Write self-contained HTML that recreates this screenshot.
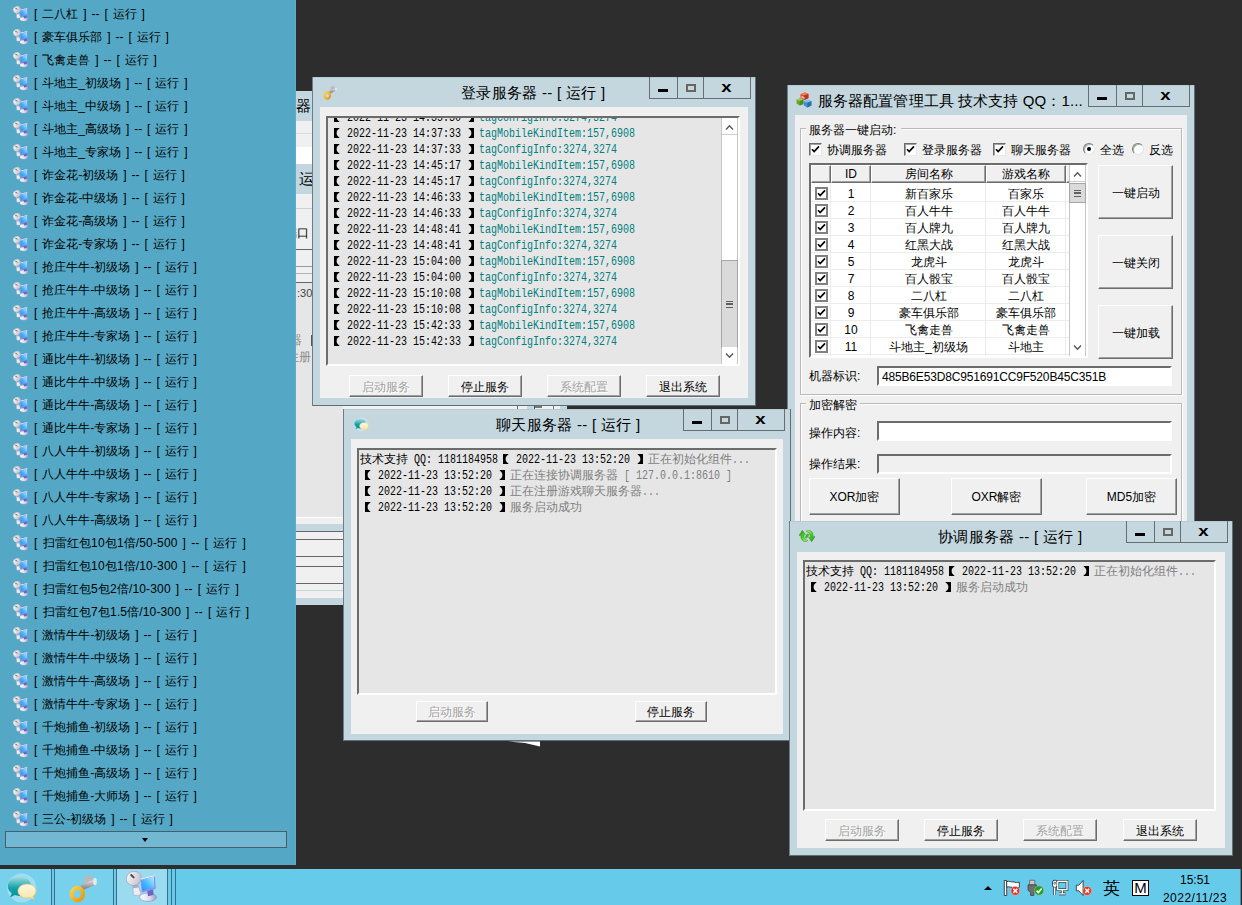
<!DOCTYPE html>
<html lang="zh"><head><meta charset="utf-8"><title>desktop</title>
<style>
*{box-sizing:border-box;margin:0;padding:0}
html,body{width:1242px;height:905px;overflow:hidden;background:#2d2d2d}
body{font-family:"Liberation Sans",sans-serif;font-size:12px;color:#000}
#desk{position:absolute;left:0;top:0;width:1242px;height:905px;overflow:hidden;background:#2d2d2d}
.abs{position:absolute}
/* left panel */
#lp{position:absolute;left:0;top:0;width:296px;height:865px;background:#55a8c5;border-right:1px solid #5cafcd;overflow:hidden}
.lr{position:absolute;left:0;height:23px;line-height:23px;white-space:nowrap;font-size:12px;word-spacing:1.6px}
.lr span{position:absolute;left:34px;top:0}
.li{position:absolute;left:13px;top:3px}
#lpbtn{position:absolute;left:5px;top:831px;width:282px;height:17px;border:1px solid #4a5d6a;background:#73b8d2}
#lpbtn i{position:absolute;left:136px;top:6px;width:0;height:0;border-left:3.500px solid transparent;border-right:3.500px solid transparent;border-top:4px solid #000}
/* windows */
.win{position:absolute;background:#c4d7df;box-shadow:inset 1px 0 0 #6c7f89,inset -1px 0 0 #5f6f78,inset 0 -1px 0 #5f6f78,inset 0 1px 0 #b7cad3}
.wt{position:absolute;left:0;right:0;top:0;height:31px;line-height:31px;text-align:center;font-size:15px;white-space:nowrap}
.cap{position:absolute;top:0;height:22px;width:102px;border:1px solid #666e73;border-top:none}
.cap b{position:absolute;top:0;bottom:0;width:1px;background:#666e73}
.cl{position:absolute;background:#f0f0f0}
.log{position:absolute;background:#e6e6e6;border:2px solid;border-color:#6c6c6c #fff #fff #6c6c6c;overflow:hidden}
.btn{position:absolute;overflow:hidden;background:#f0f0f0;border:1px solid;border-color:#fff #6d6d6d #6d6d6d #fff;box-shadow:inset -1px -1px 0 #a0a0a0;text-align:center;font-size:12px;white-space:nowrap}
.btn.dis{color:#a0a0a0;text-shadow:1px 1px 0 #fff}
.ll{position:absolute;left:1px;height:16px;line-height:16px;white-space:nowrap;font-size:12px}
.m{font-family:"Liberation Mono",monospace;display:inline-block;transform:scaleX(.8333);transform-origin:0 50%;white-space:pre;vertical-align:top}
.k{display:inline-block;width:12px;height:16px;vertical-align:top}
.t{color:#008080}
.g{color:#808080}
.win>.wb{display:none}
.wtt{display:inline-block;white-space:nowrap;text-align:center;overflow:visible;letter-spacing:.3px}
.cap i{position:absolute;font-style:normal}
.cap .mn{left:8px;top:12px;width:10px;height:3px;background:#000}
.cap .mx{left:36px;top:7px;width:10px;height:8px;border:2px solid #666}
.cap .cx{left:53px;top:0;width:47px;height:21px;line-height:19px;text-align:center;font-weight:bold;font-size:15.500px;color:#000;transform:scaleX(1.2)}
.sb{position:absolute;background:#fff;border-left:1px solid #c6c6c6;border-right:1px solid #c6c6c6}
.sbb{position:absolute;left:0;width:15px;height:17px;background:#fff}
.sbb:first-child{border-bottom:1px solid #d0d0d0}
.sbb svg{position:absolute;left:-1px;top:0}
.sbt{position:absolute;left:-1px;width:17px;background:#dadada;border:1px solid #a6a6a6}
.sbt u{position:absolute;left:4px;width:7px;height:7px;border-top:1.500px solid #606060;border-bottom:1.500px solid #606060;text-decoration:none}
.sbt u:after{content:"";position:absolute;left:0;top:1.200px;width:7px;height:1.500px;background:#606060}
.gb{position:absolute;border:1px solid #b9b9b9;box-shadow:inset 1px 1px 0 #fff,1px 1px 0 #fff}
.gl{position:absolute;margin-top:1px;height:14px;line-height:14px;background:#f0f0f0;padding-left:3px;white-space:nowrap;font-size:12px}
.lb{position:absolute;margin-top:1px;height:14px;line-height:14px;white-space:nowrap;font-size:12px}
.cb{position:absolute;width:13px;height:13px;background:#fff;border:1px solid;border-color:#6b6b6b #e8e8e8 #e8e8e8 #6b6b6b;box-shadow:inset 1px 1px 0 #a0a0a0}
.cb svg{position:absolute;left:-1px;top:-1px}
.rd{position:absolute;width:12px;height:12px;border-radius:50%;background:#fff;border:1px solid;border-color:#7a7a7a #e4e4e4 #e4e4e4 #7a7a7a;box-shadow:inset 1px 1px 0 #b0b0b0}
.rd i{position:absolute;left:3px;top:3px;width:4px;height:4px;border-radius:50%;background:#000}
.lv{position:absolute;background:#fff;border:2px solid;border-color:#6c6c6c #fff #fff #6c6c6c;overflow:hidden}
.lh{position:absolute;top:0;height:18px;line-height:17px;background:#f0f0f0;border:1px solid;border-color:#fff #6d6d6d #6d6d6d #fff;box-shadow:inset -1px -1px 0 #a0a0a0;text-align:center;font-size:12px;white-space:nowrap;overflow:hidden}
.vg{position:absolute;top:18px;bottom:0;width:1px;background:#ececec}
.lvr{position:absolute;left:0;width:258px;height:17px;border-bottom:1px solid #ececec;line-height:17px;font-size:12px}
.lvr span{position:absolute;top:1px;text-align:center;white-space:nowrap}
.lvc{position:absolute;left:4px;top:2px;width:13px;height:13px;background:#fff;border:2px solid #808080}
.lvc svg{position:absolute;left:-2px;top:-2px}
.ed{position:absolute;background:#fff;border:2px solid;border-color:#6c6c6c #fff #fff #6c6c6c;line-height:18px;font-size:12px;padding-left:3px;white-space:nowrap;overflow:hidden}
.ed.ro{background:#f0f0f0}
#tb{position:absolute;left:0;top:869px;width:1240px;height:36px;background:#66caea}
#tb:after{content:"";position:absolute;left:1240px;top:0;width:1px;height:36px;background:#4a8ba0}
.tbb{position:absolute;top:0;height:36px;background:#77d0ec}
.tbb.act{background:#9adbf0}
.tbs{position:absolute;top:0;width:1px;height:36px;background:#3e6e85}
.c{display:inline-block;vertical-align:top;white-space:nowrap;overflow:visible;position:relative;top:-1px}
#bg{position:absolute;left:296px;top:91px;width:271px;height:514px;overflow:hidden}
.bd{position:absolute;left:0;width:271px;overflow:hidden}
.bl{position:absolute;left:0;width:271px;height:1px;background:#666}
.bt{position:absolute;font-size:15px;line-height:18px;white-space:nowrap}
.bs{position:absolute;font-size:12px;line-height:14px;white-space:nowrap}

</style></head>
<body>
<svg width="0" height="0" style="position:absolute">
<defs>
<linearGradient id="g-blue" x1="1" y1="0" x2="0" y2="1"><stop offset="0" stop-color="#b4f2ff"/><stop offset=".55" stop-color="#4cb8ff"/><stop offset="1" stop-color="#1494ff"/></linearGradient>
<linearGradient id="g-gold" x1="0" y1="0" x2="1" y2="1"><stop offset="0" stop-color="#ffd24a"/><stop offset="1" stop-color="#e09a10"/></linearGradient>
<linearGradient id="g-teal" x1="0" y1="0" x2="0" y2="1"><stop offset="0" stop-color="#a9dede"/><stop offset=".55" stop-color="#14a2aa"/><stop offset="1" stop-color="#00939b"/></linearGradient><linearGradient id="g-cream" x1="0" y1="0" x2="0" y2="1"><stop offset="0" stop-color="#fff6e8"/><stop offset="1" stop-color="#fbe7a2"/></linearGradient><linearGradient id="g-base" x1="0" y1="0" x2="1" y2="0"><stop offset="0" stop-color="#ffffff"/><stop offset=".6" stop-color="#dcdcea"/><stop offset="1" stop-color="#9c98d8"/></linearGradient><linearGradient id="g-grn" x1="0" y1="0" x2="1" y2="1"><stop offset="0" stop-color="#1f9a0c"/><stop offset=".5" stop-color="#48cf28"/><stop offset="1" stop-color="#9cff6c"/></linearGradient><linearGradient id="g-grn2" x1="1" y1="1" x2="0" y2="0"><stop offset="0" stop-color="#1f9a0c"/><stop offset=".5" stop-color="#48cf28"/><stop offset="1" stop-color="#9cff6c"/></linearGradient><linearGradient id="g-steel" x1="0" y1="0" x2="0" y2="1"><stop offset="0" stop-color="#d0d0d0"/><stop offset="1" stop-color="#8e8e8e"/></linearGradient>
<linearGradient id="g-dish" x1="0" y1="0" x2="1" y2="1"><stop offset="0" stop-color="#ffffff"/><stop offset="1" stop-color="#b8b8c4"/></linearGradient>
<symbol id="i-pc" viewBox="0 0 16 16">
  <ellipse cx="11" cy="13.100" rx="4.200" ry="2.100" fill="url(#g-base)" stroke="#8c8cb4" stroke-width=".3"/>
  <path d="M10.600 9.800L13.600 9.100L13.800 12L11 12.600Z" fill="#6a66c8"/>
  <path d="M3.300 7L5.800 6.400L7.400 11.200C7.200 12.300 4.400 12.700 3.700 11.700Z" fill="#ececf2" stroke="#a4a4b8" stroke-width=".3"/>
  <path d="M3.400 7.200L5.800 6.600L6.300 8.200L3.500 8.600Z" fill="#a9a6dc"/>
  <ellipse cx="3.900" cy="3.700" rx="3.800" ry="3.500" transform="rotate(-25 3.900 3.700)" fill="url(#g-dish)" stroke="#9c9cac" stroke-width=".3"/>
  <path d="M2.600 2L3.800 3.200" stroke="#4a4a4a" stroke-width="1" stroke-linecap="round"/>
  <path d="M7.200 3.800L14.400 2L14.900 8.900L7.900 10.700Z" fill="#8d8fe0"/>
  <path d="M7.200 3.800L14.400 2L14.500 2.600L7.400 4.400Z" fill="#ececfa"/>
  <path d="M7.800 4.400L13.900 2.900L14.200 8.300L8.300 9.800Z" fill="url(#g-blue)"/>
</symbol>
<symbol id="i-key" viewBox="0 0 16 16">
  <path d="M8.600 6.900L8.700 3L9.600 2.300L10.300 2.800L10.900 1.900L12.300 2.100L12.500 5.100Z" fill="#b9b9b9"/>
  <path d="M7.300 8.400L14 5.300" stroke="url(#g-steel)" stroke-width="2.800"/>
  <ellipse cx="14" cy="5.200" rx=".9" ry="1.800" fill="#e8e8e8"/>
  <ellipse cx="5.200" cy="11.500" rx="2.800" ry="3.100" fill="none" stroke="url(#g-gold)" stroke-width="2.100"/>
</symbol>
<symbol id="i-chat" viewBox="0 0 16 16">
  <circle cx="8.400" cy="8.500" r="7.300" fill="#c8ecf8" opacity=".5"/>
  <path d="M7.200 2.750c3.200 0 5.800 2.170 5.800 4.850s-2.600 4.850-5.800 4.850c-.9 0-1.700-.15-2.400-.4L2.500 13.200l.9-2.100C2.200 10.200 1.400 9 1.400 7.600c0-2.680 2.600-4.850 5.800-4.850z" fill="url(#g-teal)"/>
  <path d="M11 6.500c2.500 0 4.500 1.570 4.500 3.500 0 1.100-.65 2.100-1.650 2.700l.9 1.500-2-.95c-.55.150-1.150.250-1.750.250-2.500 0-4.500-1.570-4.500-3.500s2-3.500 4.500-3.500z" fill="url(#g-cream)" stroke="#f0c468" stroke-width=".350"/>
</symbol>
<symbol id="i-cfg" viewBox="0 0 16 16">
  <path d="M4.500 2.200 L9 .6 L12.400 2 L12.400 6.200 L8 8 L4.500 6.400Z" fill="#e2492c"/>
  <path d="M4.500 2.200 L8 3.600 L12.400 2 L9 .6Z" fill="#f47a55"/>
  <path d="M8 3.600 L8 8 L12.400 6.200 L12.400 2Z" fill="#c2331c"/>
  <path d="M.6 7.600 L4.200 6.200 L7.400 7.600 L7.400 12 L3.800 13.400 L.6 11.800Z" fill="#6aa82c"/>
  <path d="M.6 7.600 L3.800 9 L7.400 7.600 L4.200 6.200Z" fill="#9bd054"/>
  <path d="M3.800 9 L3.800 13.400 L7.400 12 L7.400 7.600Z" fill="#4f8a1e"/>
  <path d="M7.800 9.200 L12 7.800 L15.400 9.200 L15.400 13.600 L11.400 15.400 L7.800 13.600Z" fill="#3f8fd0"/>
  <path d="M7.800 9.200 L11.400 10.800 L15.400 9.200 L12 7.800Z" fill="#7cc0f0"/>
  <path d="M11.400 10.800 L11.400 15.400 L15.400 13.600 L15.400 9.200Z" fill="#2a6fae"/>
  <path d="M6 4.200v2.200M6 4.200l1 1.400 1-.6v2" stroke="#fff" stroke-width=".7" fill="none"/>
</symbol>
<symbol id="i-sync" viewBox="0 0 16 12">
  <path d="M3.300.3L6.400 4.600L4.800 4.800C4.600 8 6 10 8.800 10.600C8 11.600 6.500 12 5.200 11.600C2.600 10.600 1.600 8 1.900 5.200L0 5.500Z" fill="url(#g-grn)" stroke="#1c7c0c" stroke-width=".4"/>
  <path d="M12.700 11.700L9.600 7.400L11.200 7.200C11.400 4 10 2 7.200 1.400C8 .4 9.500 0 10.800 .4C13.400 1.400 14.400 4 14.100 6.800L16 6.500Z" fill="url(#g-grn2)" stroke="#1c7c0c" stroke-width=".4"/>
  <ellipse cx="8" cy="6" rx="1.500" ry="2.600" transform="rotate(35 8 6)" fill="#2aa818" opacity=".8"/>
</symbol>
<symbol id="bl" viewBox="0 0 12 16"><path d="M5 2H10.300V2.700C8.500 3.700 7.600 5.100 7.600 7S8.500 10.300 10.300 11.300V12H5Z"/></symbol>
<symbol id="br" viewBox="0 0 12 16"><path d="M7 2H1.700V2.700C3.500 3.700 4.400 5.100 4.400 7S3.500 10.300 1.700 11.300V12H7Z"/></symbol>
</defs>
</svg>
<div id="desk">
<!-- slivers of background windows -->
<div id="bg">
  <div class="bd" style="top:0;height:30px;background:#c4d7df"><span class="bt" style="left:0;top:6px">器</span></div>
  <div class="bd" style="top:30px;height:26px;background:#f0f0f0"></div>
  <div class="bl" style="top:42px;background:#dcdcdc"></div>
  <div class="bd" style="top:56px;height:17px;background:#fff"></div>
  <div class="bd" style="top:73px;height:30px;background:#c4d7df"><span class="bt" style="left:3px;top:6px">运行</span></div>
  <div class="bd" style="top:103px;height:89px;background:#f0f0f0"><span class="bs" style="left:-11px;top:32px">端口</span></div>
  <div class="bl" style="top:117px;background:#d0d0d0"></div>
  <div class="bl" style="top:158px"></div>
  <div class="bl" style="top:175px;background:#9a9a9a"></div>
  <div class="bl" style="top:182px;background:#b5b5b5"></div>
  <div class="bl" style="top:191px"></div>
  <div class="bd" style="top:192px;height:234px;background:#e6e6e6">
    <span class="bs" style="left:1px;top:3px;color:#444;font-size:11px">:30</span>
    <span class="bs" style="left:-6px;top:50px;color:#8a8a8a">器</span>
    <span class="bs" style="left:-9px;top:67px;color:#8a8a8a">注册</span>
    <i class="abs" style="left:15px;top:52px;width:1px;height:11px;background:#555"></i>
  </div>
  <div class="bl" style="top:426px;background:#fff"></div>
  <div class="bd" style="top:427px;height:6px;background:#f0f0f0"></div>
  <div class="bd" style="top:433px;height:7px;background:#c4d7df"></div>
  <div class="bl" style="top:440px"></div>
  <div class="bd" style="top:441px;height:66px;background:#f0f0f0"></div>
  <div class="bl" style="top:448px"></div><div class="bl" style="top:465px"></div><div class="bl" style="top:475px"></div><div class="bl" style="top:492px"></div>
  <div class="bl" style="top:499px;background:#c4d7df"></div>
  <div class="bd" style="top:507px;height:7px;background:#c4d7df"></div>
  <!-- strip visible between login and chat windows -->
  <div class="abs" style="left:47px;top:315px;width:224px;height:4px;background:#f0f0f0">
    <i class="abs" style="left:174px;top:0;width:1px;height:4px;background:#666"></i>
    <i class="abs" style="left:184px;top:0;width:7px;height:4px;background:#c4d7df"></i>
    <i class="abs" style="left:191px;top:0;width:1px;height:4px;background:#555"></i>
    <i class="abs" style="left:192px;top:0;width:7px;height:2px;background:#777"></i>
    <i class="abs" style="left:210px;top:0;width:1px;height:4px;background:#777"></i>
    <i class="abs" style="left:217px;top:0;width:7px;height:4px;background:#c4d7df"></i>
  </div>
</div>
<svg class="abs" style="left:505px;top:740px" width="36" height="8"><path d="M3 1.500L35 1.500L35 6.500L20 3Z" fill="#fff"/></svg>
<div id="lp">
<div class="lr" style="top:3px"><svg class="li" width="16" height="16"><use href="#i-pc"/></svg><span>[ 二八杠 ] -- [ 运行 ]</span></div>
<div class="lr" style="top:26px"><svg class="li" width="16" height="16"><use href="#i-pc"/></svg><span>[ 豪车俱乐部 ] -- [ 运行 ]</span></div>
<div class="lr" style="top:49px"><svg class="li" width="16" height="16"><use href="#i-pc"/></svg><span>[ 飞禽走兽 ] -- [ 运行 ]</span></div>
<div class="lr" style="top:72px"><svg class="li" width="16" height="16"><use href="#i-pc"/></svg><span>[ 斗地主_初级场 ] -- [ 运行 ]</span></div>
<div class="lr" style="top:95px"><svg class="li" width="16" height="16"><use href="#i-pc"/></svg><span>[ 斗地主_中级场 ] -- [ 运行 ]</span></div>
<div class="lr" style="top:118px"><svg class="li" width="16" height="16"><use href="#i-pc"/></svg><span>[ 斗地主_高级场 ] -- [ 运行 ]</span></div>
<div class="lr" style="top:141px"><svg class="li" width="16" height="16"><use href="#i-pc"/></svg><span>[ 斗地主_专家场 ] -- [ 运行 ]</span></div>
<div class="lr" style="top:164px"><svg class="li" width="16" height="16"><use href="#i-pc"/></svg><span>[ 诈金花-初级场 ] -- [ 运行 ]</span></div>
<div class="lr" style="top:187px"><svg class="li" width="16" height="16"><use href="#i-pc"/></svg><span>[ 诈金花-中级场 ] -- [ 运行 ]</span></div>
<div class="lr" style="top:210px"><svg class="li" width="16" height="16"><use href="#i-pc"/></svg><span>[ 诈金花-高级场 ] -- [ 运行 ]</span></div>
<div class="lr" style="top:233px"><svg class="li" width="16" height="16"><use href="#i-pc"/></svg><span>[ 诈金花-专家场 ] -- [ 运行 ]</span></div>
<div class="lr" style="top:256px"><svg class="li" width="16" height="16"><use href="#i-pc"/></svg><span>[ 抢庄牛牛-初级场 ] -- [ 运行 ]</span></div>
<div class="lr" style="top:279px"><svg class="li" width="16" height="16"><use href="#i-pc"/></svg><span>[ 抢庄牛牛-中级场 ] -- [ 运行 ]</span></div>
<div class="lr" style="top:302px"><svg class="li" width="16" height="16"><use href="#i-pc"/></svg><span>[ 抢庄牛牛-高级场 ] -- [ 运行 ]</span></div>
<div class="lr" style="top:325px"><svg class="li" width="16" height="16"><use href="#i-pc"/></svg><span>[ 抢庄牛牛-专家场 ] -- [ 运行 ]</span></div>
<div class="lr" style="top:348px"><svg class="li" width="16" height="16"><use href="#i-pc"/></svg><span>[ 通比牛牛-初级场 ] -- [ 运行 ]</span></div>
<div class="lr" style="top:371px"><svg class="li" width="16" height="16"><use href="#i-pc"/></svg><span>[ 通比牛牛-中级场 ] -- [ 运行 ]</span></div>
<div class="lr" style="top:394px"><svg class="li" width="16" height="16"><use href="#i-pc"/></svg><span>[ 通比牛牛-高级场 ] -- [ 运行 ]</span></div>
<div class="lr" style="top:417px"><svg class="li" width="16" height="16"><use href="#i-pc"/></svg><span>[ 通比牛牛-专家场 ] -- [ 运行 ]</span></div>
<div class="lr" style="top:440px"><svg class="li" width="16" height="16"><use href="#i-pc"/></svg><span>[ 八人牛牛-初级场 ] -- [ 运行 ]</span></div>
<div class="lr" style="top:463px"><svg class="li" width="16" height="16"><use href="#i-pc"/></svg><span>[ 八人牛牛-中级场 ] -- [ 运行 ]</span></div>
<div class="lr" style="top:486px"><svg class="li" width="16" height="16"><use href="#i-pc"/></svg><span>[ 八人牛牛-专家场 ] -- [ 运行 ]</span></div>
<div class="lr" style="top:509px"><svg class="li" width="16" height="16"><use href="#i-pc"/></svg><span>[ 八人牛牛-高级场 ] -- [ 运行 ]</span></div>
<div class="lr" style="top:532px"><svg class="li" width="16" height="16"><use href="#i-pc"/></svg><span style="letter-spacing:.14px">[ 扫雷红包10包1倍/50-500 ] -- [ 运行 ]</span></div>
<div class="lr" style="top:555px"><svg class="li" width="16" height="16"><use href="#i-pc"/></svg><span style="letter-spacing:.14px">[ 扫雷红包10包1倍/10-300 ] -- [ 运行 ]</span></div>
<div class="lr" style="top:578px"><svg class="li" width="16" height="16"><use href="#i-pc"/></svg><span style="letter-spacing:.14px">[ 扫雷红包5包2倍/10-300 ] -- [ 运行 ]</span></div>
<div class="lr" style="top:601px"><svg class="li" width="16" height="16"><use href="#i-pc"/></svg><span style="letter-spacing:.14px">[ 扫雷红包7包1.5倍/10-300 ] -- [ 运行 ]</span></div>
<div class="lr" style="top:624px"><svg class="li" width="16" height="16"><use href="#i-pc"/></svg><span>[ 激情牛牛-初级场 ] -- [ 运行 ]</span></div>
<div class="lr" style="top:647px"><svg class="li" width="16" height="16"><use href="#i-pc"/></svg><span>[ 激情牛牛-中级场 ] -- [ 运行 ]</span></div>
<div class="lr" style="top:670px"><svg class="li" width="16" height="16"><use href="#i-pc"/></svg><span>[ 激情牛牛-高级场 ] -- [ 运行 ]</span></div>
<div class="lr" style="top:693px"><svg class="li" width="16" height="16"><use href="#i-pc"/></svg><span>[ 激情牛牛-专家场 ] -- [ 运行 ]</span></div>
<div class="lr" style="top:716px"><svg class="li" width="16" height="16"><use href="#i-pc"/></svg><span>[ 千炮捕鱼-初级场 ] -- [ 运行 ]</span></div>
<div class="lr" style="top:739px"><svg class="li" width="16" height="16"><use href="#i-pc"/></svg><span>[ 千炮捕鱼-中级场 ] -- [ 运行 ]</span></div>
<div class="lr" style="top:762px"><svg class="li" width="16" height="16"><use href="#i-pc"/></svg><span>[ 千炮捕鱼-高级场 ] -- [ 运行 ]</span></div>
<div class="lr" style="top:785px"><svg class="li" width="16" height="16"><use href="#i-pc"/></svg><span>[ 千炮捕鱼-大师场 ] -- [ 运行 ]</span></div>
<div class="lr" style="top:808px"><svg class="li" width="16" height="16"><use href="#i-pc"/></svg><span>[ 三公-初级场 ] -- [ 运行 ]</span></div>
<div id="lpbtn"><i></i></div>
</div>
<!-- login server window -->
<div class="win" style="left:312px;top:77px;width:444px;height:329px;z-index:2">
  <svg class="abs" style="left:10px;top:7px" width="16" height="16"><use href="#i-key"/></svg>
  <div class="wt" style="left:-2px"><span class="wtt" style="width:144px">登录服务器 -- [ 运行 ]</span></div>
  <div class="cap" style="left:337px"><b style="left:27px"></b><b style="left:53px"></b><i class="mn"></i><i class="mx"></i><i class="cx">x</i></div>
  <div class="cl" style="left:8px;top:30px;width:428px;height:291px">
    <div class="log" style="left:6px;top:9px;width:414px;height:250px">
      <div class="ll" style="top:-8px"><svg class="k"><use href="#bl"/></svg><span class="m" style="width:126px"> 2022-11-23 14:35:30 </span><svg class="k"><use href="#br"/></svg><span class="m t" style="width:138px">tagConfigInfo:3274,3274</span></div>
      <div class="ll" style="top:8px"><svg class="k"><use href="#bl"/></svg><span class="m" style="width:126px"> 2022-11-23 14:37:33 </span><svg class="k"><use href="#br"/></svg><span class="m t" style="width:156px">tagMobileKindItem:157,6908</span></div>
      <div class="ll" style="top:24px"><svg class="k"><use href="#bl"/></svg><span class="m" style="width:126px"> 2022-11-23 14:37:33 </span><svg class="k"><use href="#br"/></svg><span class="m t" style="width:138px">tagConfigInfo:3274,3274</span></div>
      <div class="ll" style="top:40px"><svg class="k"><use href="#bl"/></svg><span class="m" style="width:126px"> 2022-11-23 14:45:17 </span><svg class="k"><use href="#br"/></svg><span class="m t" style="width:156px">tagMobileKindItem:157,6908</span></div>
      <div class="ll" style="top:56px"><svg class="k"><use href="#bl"/></svg><span class="m" style="width:126px"> 2022-11-23 14:45:17 </span><svg class="k"><use href="#br"/></svg><span class="m t" style="width:138px">tagConfigInfo:3274,3274</span></div>
      <div class="ll" style="top:72px"><svg class="k"><use href="#bl"/></svg><span class="m" style="width:126px"> 2022-11-23 14:46:33 </span><svg class="k"><use href="#br"/></svg><span class="m t" style="width:156px">tagMobileKindItem:157,6908</span></div>
      <div class="ll" style="top:88px"><svg class="k"><use href="#bl"/></svg><span class="m" style="width:126px"> 2022-11-23 14:46:33 </span><svg class="k"><use href="#br"/></svg><span class="m t" style="width:138px">tagConfigInfo:3274,3274</span></div>
      <div class="ll" style="top:104px"><svg class="k"><use href="#bl"/></svg><span class="m" style="width:126px"> 2022-11-23 14:48:41 </span><svg class="k"><use href="#br"/></svg><span class="m t" style="width:156px">tagMobileKindItem:157,6908</span></div>
      <div class="ll" style="top:120px"><svg class="k"><use href="#bl"/></svg><span class="m" style="width:126px"> 2022-11-23 14:48:41 </span><svg class="k"><use href="#br"/></svg><span class="m t" style="width:138px">tagConfigInfo:3274,3274</span></div>
      <div class="ll" style="top:136px"><svg class="k"><use href="#bl"/></svg><span class="m" style="width:126px"> 2022-11-23 15:04:00 </span><svg class="k"><use href="#br"/></svg><span class="m t" style="width:156px">tagMobileKindItem:157,6908</span></div>
      <div class="ll" style="top:152px"><svg class="k"><use href="#bl"/></svg><span class="m" style="width:126px"> 2022-11-23 15:04:00 </span><svg class="k"><use href="#br"/></svg><span class="m t" style="width:138px">tagConfigInfo:3274,3274</span></div>
      <div class="ll" style="top:168px"><svg class="k"><use href="#bl"/></svg><span class="m" style="width:126px"> 2022-11-23 15:10:08 </span><svg class="k"><use href="#br"/></svg><span class="m t" style="width:156px">tagMobileKindItem:157,6908</span></div>
      <div class="ll" style="top:184px"><svg class="k"><use href="#bl"/></svg><span class="m" style="width:126px"> 2022-11-23 15:10:08 </span><svg class="k"><use href="#br"/></svg><span class="m t" style="width:138px">tagConfigInfo:3274,3274</span></div>
      <div class="ll" style="top:200px"><svg class="k"><use href="#bl"/></svg><span class="m" style="width:126px"> 2022-11-23 15:42:33 </span><svg class="k"><use href="#br"/></svg><span class="m t" style="width:156px">tagMobileKindItem:157,6908</span></div>
      <div class="ll" style="top:216px"><svg class="k"><use href="#bl"/></svg><span class="m" style="width:126px"> 2022-11-23 15:42:33 </span><svg class="k"><use href="#br"/></svg><span class="m t" style="width:138px">tagConfigInfo:3274,3274</span></div>
      <div class="sb" style="left:393px;top:0;width:17px;height:246px">
        <div class="sbb" style="top:0"><svg width="17" height="17"><path d="M5 11.500L8.500 7.700L12 11.500" fill="none" stroke="#585858" stroke-width="1.400"/></svg></div>
        <div class="sbt" style="top:142px;height:88px"><u style="top:40px"></u></div>
        <div class="sbb" style="bottom:0"><svg width="17" height="17"><path d="M5 6.500L8.500 10.300L12 6.500" fill="none" stroke="#585858" stroke-width="1.400"/></svg></div>
      </div>
    </div>
    <div class="btn dis" style="left:29px;top:268px;width:74px;height:22px;line-height:22px">启动服务</div>
    <div class="btn" style="left:128px;top:268px;width:74px;height:22px;line-height:22px">停止服务</div>
    <div class="btn dis" style="left:227px;top:268px;width:74px;height:22px;line-height:22px">系统配置</div>
    <div class="btn" style="left:326px;top:268px;width:74px;height:22px;line-height:22px">退出系统</div>
  </div>
</div>
<!-- config tool window -->
<div class="win" style="left:787px;top:85px;width:408px;height:480px;z-index:3">
  <svg class="abs" style="left:9px;top:7px" width="16" height="16"><use href="#i-cfg"/></svg>
  <div class="wt" style="text-align:left;left:31px;right:auto;width:264px;overflow:hidden"><span class="wtt" style="width:264px;text-align:left;letter-spacing:.1px">服务器配置管理工具 技术支持 QQ：1...</span></div>
  <div class="cap" style="left:301px"><b style="left:27px"></b><b style="left:53px"></b><i class="mn"></i><i class="mx"></i><i class="cx">x</i></div>
  <div class="cl" style="left:8px;top:30px;width:392px;height:442px">
    <!-- group 1 -->
    <div class="gb" style="left:5px;top:13px;width:382px;height:267px"></div>
    <div class="gl" style="left:11px;top:7px;width:95px">服务器一键启动:</div>
    <div class="cb" style="left:14px;top:28px"><svg width="13" height="13"><path d="M3 6.200L5.200 8.600L10 3.400" fill="none" stroke="#000" stroke-width="1.700"/></svg></div>
    <div class="lb" style="left:32px;top:27px">协调服务器</div>
    <div class="cb" style="left:109px;top:28px"><svg width="13" height="13"><path d="M3 6.200L5.200 8.600L10 3.400" fill="none" stroke="#000" stroke-width="1.700"/></svg></div>
    <div class="lb" style="left:127px;top:27px">登录服务器</div>
    <div class="cb" style="left:198px;top:28px"><svg width="13" height="13"><path d="M3 6.200L5.200 8.600L10 3.400" fill="none" stroke="#000" stroke-width="1.700"/></svg></div>
    <div class="lb" style="left:216px;top:27px">聊天服务器</div>
    <div class="rd" style="left:288px;top:28px"><i></i></div>
    <div class="lb" style="left:305px;top:27px">全选</div>
    <div class="rd" style="left:337px;top:28px"></div>
    <div class="lb" style="left:354px;top:27px">反选</div>
    <!-- list view -->
    <div class="lv" style="left:14px;top:48px;width:279px;height:195px">
      <div class="lh" style="left:0;width:20px"></div>
      <div class="lh" style="left:20px;width:40px">ID</div>
      <div class="lh" style="left:60px;width:115px">房间名称</div>
      <div class="lh" style="left:175px;width:80px">游戏名称</div>
      <div class="lh" style="left:255px;width:5px"></div>
      <div class="vg" style="left:19px"></div><div class="vg" style="left:59px"></div><div class="vg" style="left:174px"></div><div class="vg" style="left:254px"></div>
      <div class="lvr" style="top:20px"><div class="lvc"><svg width="13" height="13"><path d="M3 6.200L5.200 8.600L10 3.400" fill="none" stroke="#000" stroke-width="1.700"/></svg></div><span style="left:20px;width:40px">1</span><span style="left:60px;width:115px">新百家乐</span><span style="left:175px;width:80px">百家乐</span></div>
      <div class="lvr" style="top:37px"><div class="lvc"><svg width="13" height="13"><path d="M3 6.200L5.200 8.600L10 3.400" fill="none" stroke="#000" stroke-width="1.700"/></svg></div><span style="left:20px;width:40px">2</span><span style="left:60px;width:115px">百人牛牛</span><span style="left:175px;width:80px">百人牛牛</span></div>
      <div class="lvr" style="top:54px"><div class="lvc"><svg width="13" height="13"><path d="M3 6.200L5.200 8.600L10 3.400" fill="none" stroke="#000" stroke-width="1.700"/></svg></div><span style="left:20px;width:40px">3</span><span style="left:60px;width:115px">百人牌九</span><span style="left:175px;width:80px">百人牌九</span></div>
      <div class="lvr" style="top:71px"><div class="lvc"><svg width="13" height="13"><path d="M3 6.200L5.200 8.600L10 3.400" fill="none" stroke="#000" stroke-width="1.700"/></svg></div><span style="left:20px;width:40px">4</span><span style="left:60px;width:115px">红黑大战</span><span style="left:175px;width:80px">红黑大战</span></div>
      <div class="lvr" style="top:88px"><div class="lvc"><svg width="13" height="13"><path d="M3 6.200L5.200 8.600L10 3.400" fill="none" stroke="#000" stroke-width="1.700"/></svg></div><span style="left:20px;width:40px">5</span><span style="left:60px;width:115px">龙虎斗</span><span style="left:175px;width:80px">龙虎斗</span></div>
      <div class="lvr" style="top:105px"><div class="lvc"><svg width="13" height="13"><path d="M3 6.200L5.200 8.600L10 3.400" fill="none" stroke="#000" stroke-width="1.700"/></svg></div><span style="left:20px;width:40px">7</span><span style="left:60px;width:115px">百人骰宝</span><span style="left:175px;width:80px">百人骰宝</span></div>
      <div class="lvr" style="top:122px"><div class="lvc"><svg width="13" height="13"><path d="M3 6.200L5.200 8.600L10 3.400" fill="none" stroke="#000" stroke-width="1.700"/></svg></div><span style="left:20px;width:40px">8</span><span style="left:60px;width:115px">二八杠</span><span style="left:175px;width:80px">二八杠</span></div>
      <div class="lvr" style="top:139px"><div class="lvc"><svg width="13" height="13"><path d="M3 6.200L5.200 8.600L10 3.400" fill="none" stroke="#000" stroke-width="1.700"/></svg></div><span style="left:20px;width:40px">9</span><span style="left:60px;width:115px">豪车俱乐部</span><span style="left:175px;width:80px">豪车俱乐部</span></div>
      <div class="lvr" style="top:156px"><div class="lvc"><svg width="13" height="13"><path d="M3 6.200L5.200 8.600L10 3.400" fill="none" stroke="#000" stroke-width="1.700"/></svg></div><span style="left:20px;width:40px">10</span><span style="left:60px;width:115px">飞禽走兽</span><span style="left:175px;width:80px">飞禽走兽</span></div>
      <div class="lvr" style="top:173px"><div class="lvc"><svg width="13" height="13"><path d="M3 6.200L5.200 8.600L10 3.400" fill="none" stroke="#000" stroke-width="1.700"/></svg></div><span style="left:20px;width:40px">11</span><span style="left:60px;width:115px">斗地主_初级场</span><span style="left:175px;width:80px">斗地主</span></div>
      <div class="sb" style="left:258px;top:0;width:17px;height:191px">
        <div class="sbb" style="top:0"><svg width="17" height="17"><path d="M5 11.500L8.500 7.700L12 11.500" fill="none" stroke="#585858" stroke-width="1.400"/></svg></div>
        <div class="sbt" style="top:18px;height:20px"><u style="top:6px"></u></div>
        <div class="sbb" style="bottom:0"><svg width="17" height="17"><path d="M5 6.500L8.500 10.300L12 6.500" fill="none" stroke="#585858" stroke-width="1.400"/></svg></div>
      </div>
    </div>
    <div class="btn" style="left:303px;top:50px;width:75px;height:54px;line-height:54px">一键启动</div>
    <div class="btn" style="left:303px;top:120px;width:75px;height:54px;line-height:54px">一键关闭</div>
    <div class="btn" style="left:303px;top:190px;width:75px;height:54px;line-height:54px">一键加载</div>
    <div class="lb" style="left:14px;top:253px">机器标识:</div>
    <div class="ed" style="left:82px;top:251px;width:295px;height:20px"><span style="letter-spacing:-.17px">485B6E53D8C951691CC9F520B45C351B</span></div>
    <!-- group 2 -->
    <div class="gb" style="left:5px;top:288px;width:382px;height:160px"></div>
    <div class="gl" style="left:11px;top:282px;width:54px">加密解密</div>
    <div class="lb" style="left:14px;top:310px">操作内容:</div>
    <div class="ed" style="left:82px;top:306px;width:295px;height:20px"></div>
    <div class="lb" style="left:14px;top:341px">操作结果:</div>
    <div class="ed ro" style="left:82px;top:339px;width:295px;height:20px"></div>
    <div class="btn" style="left:14px;top:363px;width:91px;height:37px;line-height:37px">XOR加密</div>
    <div class="btn" style="left:156px;top:363px;width:91px;height:37px;line-height:37px">OXR解密</div>
    <div class="btn" style="left:291px;top:363px;width:91px;height:37px;line-height:37px">MD5加密</div>
  </div>
</div>
<!-- chat server window -->
<div class="win" style="left:343px;top:409px;width:448px;height:332px;z-index:4">
  <svg class="abs" style="left:10px;top:7px" width="16" height="16"><use href="#i-chat"/></svg>
  <div class="wt" style="left:2px"><span class="wtt" style="width:144px">聊天服务器 -- [ 运行 ]</span></div>
  <div class="cap" style="left:340px"><b style="left:27px"></b><b style="left:53px"></b><i class="mn"></i><i class="mx"></i><i class="cx">x</i></div>
  <div class="cl" style="left:8px;top:30px;width:432px;height:295px">
    <div class="log" style="left:6px;top:9px;width:420px;height:247px">
      <div class="ll" style="top:2px"><span class="c " style="width:48px">技术支持</span><span class="m" style="width:90px"> QQ: 1181184958</span><svg class="k"><use href="#bl"/></svg><span class="m" style="width:126px"> 2022-11-23 13:52:20 </span><svg class="k"><use href="#br"/></svg><span class="c g" style="width:84px">正在初始化组件</span><span class="m g" style="width:18px">...</span></div>
      <div class="ll" style="top:18px"><svg class="k"><use href="#bl"/></svg><span class="m" style="width:126px"> 2022-11-23 13:52:20 </span><svg class="k"><use href="#br"/></svg><span class="c g" style="width:108px">正在连接协调服务器</span><span class="m g" style="width:114px"> [ 127.0.0.1:8610 ]</span></div>
      <div class="ll" style="top:34px"><svg class="k"><use href="#bl"/></svg><span class="m" style="width:126px"> 2022-11-23 13:52:20 </span><svg class="k"><use href="#br"/></svg><span class="c g" style="width:132px">正在注册游戏聊天服务器</span><span class="m g" style="width:18px">...</span></div>
      <div class="ll" style="top:50px"><svg class="k"><use href="#bl"/></svg><span class="m" style="width:126px"> 2022-11-23 13:52:20 </span><svg class="k"><use href="#br"/></svg><span class="c g" style="width:72px">服务启动成功</span></div>
    </div>
    <div class="btn dis" style="left:65px;top:262px;width:72px;height:21px;line-height:21px">启动服务</div>
    <div class="btn" style="left:284px;top:262px;width:72px;height:21px;line-height:21px">停止服务</div>
  </div>
</div>
<!-- coordination server window -->
<div class="win" style="left:789px;top:521px;width:444px;height:335px;z-index:5">
  <svg class="abs" style="left:10px;top:9px" width="16" height="12"><use href="#i-sync"/></svg>
  <div class="wt" style="left:-2px"><span class="wtt" style="width:144px">协调服务器 -- [ 运行 ]</span></div>
  <div class="cap" style="left:337px"><b style="left:27px"></b><b style="left:53px"></b><i class="mn"></i><i class="mx"></i><i class="cx">x</i></div>
  <div class="cl" style="left:8px;top:31px;width:428px;height:296px">
    <div class="log" style="left:6px;top:8px;width:413px;height:251px">
      <div class="ll" style="top:2px"><span class="c " style="width:48px">技术支持</span><span class="m" style="width:90px"> QQ: 1181184958</span><svg class="k"><use href="#bl"/></svg><span class="m" style="width:126px"> 2022-11-23 13:52:20 </span><svg class="k"><use href="#br"/></svg><span class="c g" style="width:84px">正在初始化组件</span><span class="m g" style="width:18px">...</span></div>
      <div class="ll" style="top:18px"><svg class="k"><use href="#bl"/></svg><span class="m" style="width:126px"> 2022-11-23 13:52:20 </span><svg class="k"><use href="#br"/></svg><span class="c g" style="width:72px">服务启动成功</span></div>
    </div>
    <div class="btn dis" style="left:28px;top:267px;width:74px;height:22px;line-height:22px">启动服务</div>
    <div class="btn" style="left:127px;top:267px;width:74px;height:22px;line-height:22px">停止服务</div>
    <div class="btn dis" style="left:226px;top:267px;width:74px;height:22px;line-height:22px">系统配置</div>
    <div class="btn" style="left:326px;top:267px;width:74px;height:22px;line-height:22px">退出系统</div>
  </div>
</div>
<!-- taskbar -->
<div id="tb">
  <div class="tbb" style="left:0;width:51px"></div>
  <div class="tbs" style="left:51px"></div><div class="tbs" style="left:54px"></div>
  <div class="tbb" style="left:55px;width:58px"></div>
  <div class="tbs" style="left:113px"></div><div class="tbs" style="left:116px"></div>
  <div class="tbb act" style="left:117px;width:50px"></div>
  <div class="tbs" style="left:167px"></div><div class="tbs" style="left:171px"></div><div class="tbs" style="left:175px"></div>
  <svg class="abs" style="left:5px;top:2px" width="32" height="32"><use href="#i-chat"/></svg>
  <svg class="abs" style="left:67px;top:2px" width="32" height="32"><use href="#i-key"/></svg>
  <svg class="abs" style="left:125.500px;top:2px" width="32" height="32"><use href="#i-pc"/></svg>
  <!-- tray -->
  <i class="abs" style="left:984px;top:17px;width:0;height:0;border-left:4px solid transparent;border-right:4px solid transparent;border-bottom:4.500px solid #000"></i>
  <svg class="abs" style="left:1003px;top:10px" width="18" height="18" viewBox="0 0 18 18"><path d="M1.300 1.500h2.400v15h-2.400z" fill="#fff" stroke="#222" stroke-width=".8"/><path d="M3.700 2.700c2.500-1.300 4.500.9 7.300.2 1.300.9 3 .8 5.300.3v5.200c-2.300.9-4.200.7-5.300-.2-2.800.9-4.800-1.300-7.300 0z" fill="#fff" stroke="#222" stroke-width=".8"/><circle cx="12.300" cy="11.800" r="4.400" fill="#e23426"/><circle cx="12.300" cy="11.800" r="4.400" fill="none" stroke="#f6b0a8" stroke-width=".6"/><path d="M10.400 9.900l3.800 3.800M14.200 9.900l-3.800 3.800" stroke="#fff" stroke-width="1.600"/></svg>
  <svg class="abs" style="left:1027px;top:10px" width="18" height="18" viewBox="0 0 18 18"><path d="M2.600 1.300h5.200v4.600h-5.200z" fill="#c9c9c9" stroke="#555" stroke-width=".7"/><path d="M1 5.800h8.400v5.400l-2.600 2.300v3h-3.200v-3l-2.600-2.300z" fill="#6e6e6e" stroke="#3c3c3c" stroke-width=".7"/><circle cx="12" cy="11.500" r="4.700" fill="#2a9c2a"/><circle cx="12" cy="11.500" r="4.700" fill="none" stroke="#7ed07e" stroke-width=".6"/><path d="M9.600 11.600l1.800 1.900 3.200-4" stroke="#fff" stroke-width="1.600" fill="none"/></svg>
  <svg class="abs" style="left:1051px;top:10px" width="18" height="18" viewBox="0 0 18 18"><g fill="none" stroke="#1e2a30" stroke-width="2.600"><rect x="6.800" y="2.300" width="9.200" height="8.400"/><path d="M8 14.900h6.600M11.400 11v3.800"/><path d="M3.700 8.500v7.500"/></g><rect x="1.600" y="1.300" width="4.400" height="7" rx="1.700" fill="#fff" stroke="#1e2a30" stroke-width=".9"/><g fill="none" stroke="#fff" stroke-width="1.400"><rect x="6.800" y="2.300" width="9.200" height="8.400"/><path d="M8 14.900h6.600M11.400 11v3.800"/><path d="M3.700 8.500v7.500"/></g><circle cx="3.800" cy="4.200" r="1" fill="none" stroke="#1e2a30" stroke-width=".6"/></svg>
  <svg class="abs" style="left:1075px;top:10px" width="18" height="18" viewBox="0 0 18 18"><path d="M1.300 6.200h2.500l4.300-4.700v15l-4.300-4.700h-2.500z" fill="#fff" stroke="#222" stroke-width=".8"/><circle cx="12.200" cy="11.800" r="4.400" fill="#e23426"/><circle cx="12.200" cy="11.800" r="4.400" fill="none" stroke="#f6b0a8" stroke-width=".6"/><path d="M10.300 9.900l3.800 3.800M14.100 9.900l-3.800 3.800" stroke="#fff" stroke-width="1.600"/></svg>
  <div class="abs" style="left:1102px;top:10px;width:19px;height:20px;line-height:20px;font-size:17px;text-align:center;overflow:hidden">英</div>
  <div class="abs" style="left:1132px;top:11px;width:17px;height:16px;background:#fff;border:1px solid #000;line-height:14px;font-size:15px;text-align:center">M</div>
  <div class="abs" style="left:1160px;top:4px;width:70px;height:14px;line-height:14px;text-align:center;font-size:12px">15:51</div>
  <div class="abs" style="left:1160px;top:22px;width:70px;height:14px;line-height:14px;text-align:center;font-size:12px;letter-spacing:.5px">2022/11/23</div>
</div>
</div>
</body></html>
